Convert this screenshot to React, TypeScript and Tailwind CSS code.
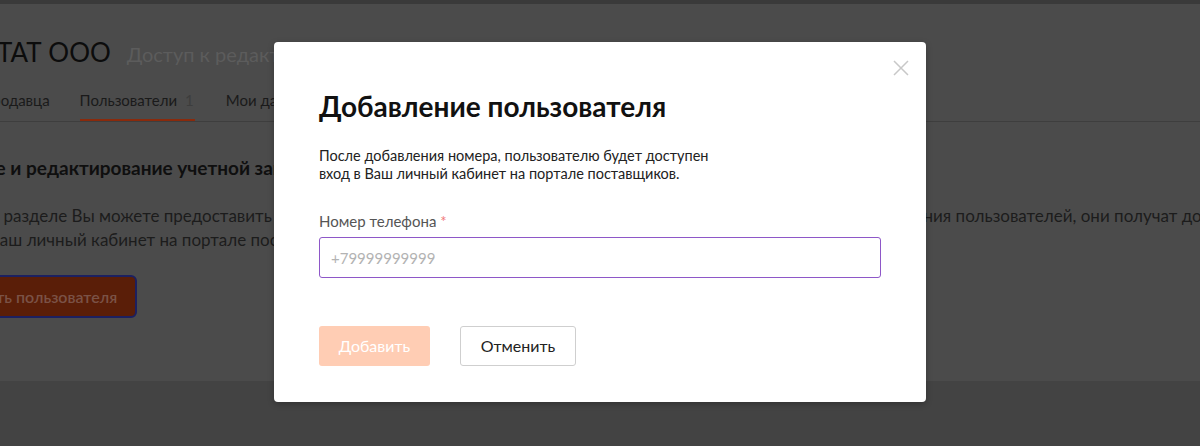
import React from 'react';

const App: React.FC = () => {
  return (
    <div className="relative h-[446px] w-full overflow-hidden bg-[#434343] font-['Lato',sans-serif]">
      <div className="h-[4px] bg-[#3a3a3a]" />

      {/* page under the dimmed overlay */}
      <div className="h-[377px] overflow-hidden bg-[#4b4b4b] whitespace-nowrap">
        <div className="mt-[31px] flex items-baseline">
          <h1 className="ml-[-3px] text-[26px] leading-[34px] text-[#0c0c0c]">ТАТ ООО</h1>
          <span className="ml-[16px] text-[20px] text-[#5c5c5c]">Доступ к редактированию</span>
        </div>

        <div className="mt-[21px] flex border-b border-[#3e3e3e] text-[15px] leading-[20px] text-[#1a1a1a]">
          <div className="ml-[-83px] pb-[10px]">Профиль продавца</div>
          <div className="ml-[30px] border-b-2 border-[#8a2a0c] pb-[9px] pr-[1px]">
            Пользователи <span className="ml-[4px] text-[#3d3d3d]">1</span>
          </div>
          <div className="ml-[31px] pb-[10px]">Мои данные</div>
        </div>

        <div className="ml-[-104px] mt-[33px] text-[19px] font-bold leading-[26px] text-[#0f0f0f]">
          Добавление и редактирование учетной записи
        </div>

        <div className="mt-[23px] text-[17px] leading-[24px] text-[#1c1c1c]">
          <div className="ml-[-54px]">
            В этом разделе Вы можете предоставить доступ к редактированию учетной записи сотрудникам компании. После добавления пользователей, они получат доступ в
          </div>
          <div className="ml-[-11px]">Ваш личный кабинет на портале поставщиков.</div>
        </div>

        <button className="ml-[-82px] mt-[23px] h-[43px] rounded-[6px] border-2 border-[#1c2060] bg-[#5a1e08] pl-[20px] pr-[18px] text-[16px] font-semibold text-[#7a5246]">
          Добавить пользователя
        </button>
      </div>

      {/* modal */}
      <div className="absolute inset-0 flex items-center justify-center">
        <div className="relative h-[360px] w-[652px] translate-y-[-1px] rounded-[4px] bg-white px-[45px] pt-[47px] shadow-[0_2px_6px_rgba(0,0,0,0.25)]">
          <button className="absolute right-[17px] top-[18px] text-[#c8c8c8]">
            <svg width="16" height="16" viewBox="0 0 16 16" fill="none" stroke="currentColor" strokeWidth="1.5">
              <path d="M1 1L15 15M15 1L1 15" />
            </svg>
          </button>

          <h2 className="text-[28px] font-bold leading-[34px] text-[#111]">Добавление пользователя</h2>

          <p className="mt-[24px] text-[14.5px] leading-[18px] text-[#222]">
            После добавления номера, пользователю будет доступен
            <br />
            вход в Ваш личный кабинет на портале поставщиков.
          </p>

          <label className="mt-[29px] block text-[15px] leading-[18px] text-[#555]">
            Номер телефона <span className="text-[#f07878]">*</span>
          </label>
          <input
            type="text"
            placeholder="+79999999999"
            className="mt-[7px] h-[41px] w-full rounded-[3px] border border-[#8e57c8] px-[11px] text-[15px] text-[#222] outline-none placeholder:text-[#b3b3b3]"
          />

          <div className="mt-[48px] flex gap-[30px]">
            <button className="h-[40px] w-[111px] rounded-[3px] bg-[#ffcdb4] text-[16px] text-white">Добавить</button>
            <button className="h-[40px] w-[116px] rounded-[3px] border border-[#cfcfcf] bg-white text-[16px] text-[#222]">
              Отменить
            </button>
          </div>
        </div>
      </div>
    </div>
  );
};

export default App;
